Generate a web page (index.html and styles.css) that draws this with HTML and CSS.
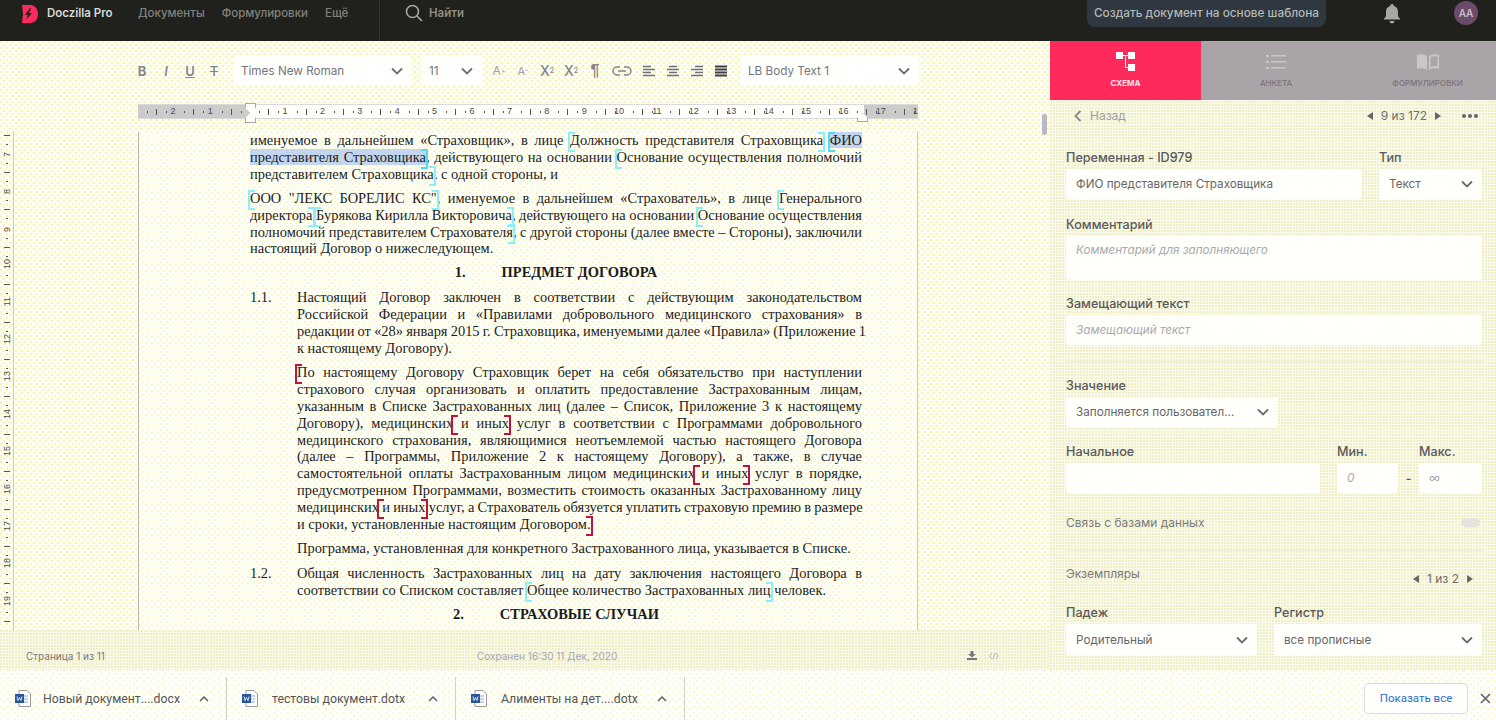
FILE: index.html
```html
<!DOCTYPE html>
<html lang="ru">
<head>
    <meta charset="UTF-8">
    <title>Doczilla Pro</title>
    <link rel="stylesheet" href="styles.css">
</head>
<body>
    <!-- Top bar -->
    <header class="topbar">
        <svg class="logo" width="18" height="20" viewBox="0 0 18 20">
            <path d="M1 1h8c5 0 8 4 8 9s-3 9-8 9H1l1-9z" fill="#ff2a5c"/>
            <path d="M9 4L4 11h3l-2 5 6-7H8l2-5z" fill="#26201f"/>
        </svg>
        <span class="brand">Doczilla Pro</span>
        <nav class="nav">
            <a>Документы</a>
            <a>Формулировки</a>
            <a>Ещё</a>
        </nav>
        <div class="search">
            <svg width="18" height="18" viewBox="0 0 18 18" fill="none" stroke="#a9a9a4" stroke-width="1.6">
                <circle cx="7.5" cy="7.5" r="6"/><path d="M12 12l5 5"/>
            </svg>
            <span>Найти</span>
        </div>
        <div class="create-btn">Создать документ на основе шаблона</div>
        <svg class="bell" width="18" height="21" viewBox="0 0 18 21">
            <path d="M9 1a1.6 1.6 0 0 1 1.6 1.8C13.5 3.6 15 6 15 9v4l2.4 3.4H.6L3 13V9c0-3 1.5-5.4 4.4-6.2A1.6 1.6 0 0 1 9 1z" fill="#a8a8a2"/>
            <path d="M6.5 18h5a2.5 2.5 0 0 1-5 0z" fill="#a8a8a2"/>
        </svg>
        <div class="avatar">AA</div>
    </header>

    <div class="main">
        <!-- Editor -->
        <section class="editor">
            <div class="toolbar">
                <span class="tool tool-b">B</span>
                <span class="tool tool-i">I</span>
                <span class="tool tool-u">U</span>
                <span class="tool tool-s">T</span>
                <div class="select select-font">Times New Roman<svg class="chev" viewBox="0 0 12 8"><path d="M1 1.5l5 5 5-5"/></svg></div>
                <div class="select select-size">11<svg class="chev" viewBox="0 0 12 8"><path d="M1 1.5l5 5 5-5"/></svg></div>
                <span class="tool tool-first tool-a">A<sup>+</sup></span>
                <span class="tool tool-a small">A<sup>-</sup></span>
                <span class="tool tool-x">X<sub>2</sub></span>
                <span class="tool tool-x">X<sup>2</sup></span>
                <span class="tool tool-p">¶</span>
                <span class="tool tool-link">
                    <svg width="20" height="10" viewBox="0 0 20 10" fill="none" stroke="#85858c" stroke-width="1.5">
                        <path d="M8 1H5a4 4 0 0 0 0 8h3M12 1h3a4 4 0 0 1 0 8h-3M6 5h8"/>
                    </svg>
                </span>
                <span class="tool"><svg width="12" height="12" viewBox="0 0 12 12" stroke="#70707a" stroke-width="1.6"><path d="M0 1.5h8M0 4.5h12M0 7.5h8M0 10.5h12"/></svg></span>
                <span class="tool"><svg width="12" height="12" viewBox="0 0 12 12" stroke="#70707a" stroke-width="1.6"><path d="M2 1.5h8M0 4.5h12M2 7.5h8M0 10.5h12"/></svg></span>
                <span class="tool"><svg width="12" height="12" viewBox="0 0 12 12" stroke="#70707a" stroke-width="1.6"><path d="M4 1.5h8M0 4.5h12M4 7.5h8M0 10.5h12"/></svg></span>
                <span class="tool"><svg width="12" height="12" viewBox="0 0 12 12" stroke="#3e3e46" stroke-width="1.8"><path d="M0 1.5h12M0 4.5h12M0 7.5h12M0 10.5h12"/></svg></span>
                <div class="select select-style">LB Body Text 1<svg class="chev" viewBox="0 0 12 8"><path d="M1 1.5l5 5 5-5"/></svg></div>
            </div>

            <div class="ruler">
                <span class="cm">2</span><span class="cm">1</span><span class="cm"></span>
                <span class="cm">1</span><span class="cm">2</span><span class="cm">3</span><span class="cm">4</span>
                <span class="cm">5</span><span class="cm">6</span><span class="cm">7</span><span class="cm">8</span>
                <span class="cm">9</span><span class="cm">10</span><span class="cm">11</span><span class="cm">12</span>
                <span class="cm">13</span><span class="cm">14</span><span class="cm">15</span><span class="cm">16</span>
                <span class="cm">17</span><span class="cm">1</span>
                <i class="indent indent-left"></i>
                <i class="indent indent-right"></i>
            </div>

            <div class="doc-area">
                <div class="vruler">
                    <span class="vcm"><b>7</b></span><span class="vcm"><b>8</b></span><span class="vcm"><b>9</b></span>
                    <span class="vcm"><b>10</b></span><span class="vcm"><b>11</b></span><span class="vcm"><b>12</b></span>
                    <span class="vcm"><b>13</b></span><span class="vcm"><b>14</b></span><span class="vcm"><b>15</b></span>
                    <span class="vcm"><b>16</b></span><span class="vcm"><b>17</b></span><span class="vcm"><b>18</b></span>
                    <span class="vcm"><b>19</b></span><span class="vcm"></span>
                </div>
                <div class="page">
                    <div class="doc">
                        <p>
                            <span class="ln">именуемое в дальнейшем «Страховщик», в лице <i class="mk open"></i>Должность представителя Страховщика<i class="mk close"></i> <span class="sel"><i class="mk open strong"></i>ФИО</span></span>
                            <span class="ln"><span class="sel">представителя Страховщика<i class="mk close strong"></i></span>, действующего на основании <i class="mk open"></i>Основание осуществления полномочий</span>
                            <span class="ln last">представителем Страховщика<i class="mk close"></i>, с одной стороны, и</span>
                        </p>
                        <p>
                            <span class="ln"><i class="mk open"></i>ООО "ЛЕКС БОРЕЛИС КС"<i class="mk close"></i>, именуемое в дальнейшем «Страхователь», в лице <i class="mk open"></i>Генерального</span>
                            <span class="ln">директора<i class="mk close"></i> <i class="mk open"></i>Бурякова Кирилла Викторовича<i class="mk close"></i>, действующего на основании <i class="mk open"></i>Основание осуществления</span>
                            <span class="ln">полномочий представителем Страхователя<i class="mk close"></i>, с другой стороны (далее вместе – Стороны), заключили</span>
                            <span class="ln last">настоящий Договор о нижеследующем.</span>
                        </p>
                        <h3 class="doc-title"><span>1.</span><span>ПРЕДМЕТ ДОГОВОРА</span></h3>
                        <div class="item">
                            <span>1.1.</span>
                            <div>
                                <p>
                                    <span class="ln">Настоящий Договор заключен в соответствии с действующим законодательством</span>
                                    <span class="ln">Российской Федерации и «Правилами добровольного медицинского страхования» в</span>
                                    <span class="ln">редакции от «28» января 2015 г. Страховщика, именуемыми далее «Правила» (Приложение 1</span>
                                    <span class="ln last">к настоящему Договору).</span>
                                </p>
                                <p>
                                    <span class="ln"><i class="mk open red"></i>По настоящему Договору Страховщик берет на себя обязательство при наступлении</span>
                                    <span class="ln">страхового случая организовать и оплатить предоставление Застрахованным лицам,</span>
                                    <span class="ln">указанным в Списке Застрахованных лиц (далее – Список, Приложение 3 к настоящему</span>
                                    <span class="ln">Договору), медицинских<i class="mk open red"></i> и иных<i class="mk close red"></i> услуг в соответствии с Программами добровольного</span>
                                    <span class="ln">медицинского страхования, являющимися неотъемлемой частью настоящего Договора</span>
                                    <span class="ln">(далее – Программы, Приложение 2 к настоящему Договору), а также, в случае</span>
                                    <span class="ln">самостоятельной оплаты Застрахованным лицом медицинских<i class="mk open red"></i> и иных<i class="mk close red"></i> услуг в порядке,</span>
                                    <span class="ln">предусмотренном Программами, возместить стоимость оказанных Застрахованному лицу</span>
                                    <span class="ln">медицинских<i class="mk open red"></i> и иных<i class="mk close red"></i> услуг, а Страхователь обязуется уплатить страховую премию в размере</span>
                                    <span class="ln last">и сроки, установленные настоящим Договором.<i class="mk close red"></i></span>
                                </p>
                                <p>
                                    <span class="ln last">Программа, установленная для конкретного Застрахованного лица, указывается в Списке.</span>
                                </p>
                            </div>
                        </div>
                        <div class="item item-next">
                            <span>1.2.</span>
                            <div>
                                <p>
                                    <span class="ln">Общая численность Застрахованных лиц на дату заключения настоящего Договора в</span>
                                    <span class="ln last">соответствии со Списком составляет <i class="mk open"></i>Общее количество Застрахованных лиц<i class="mk close"></i> человек.</span>
                                </p>
                            </div>
                        </div>
                        <h3 class="doc-title title-2"><span>2.</span><span>СТРАХОВЫЕ СЛУЧАИ</span></h3>
                    </div>
                </div>
            </div>

            <div class="status">
                <span class="status-page">Страница 1 из 11</span>
                <span class="status-saved">Сохранен 16:30 11 Дек, 2020</span>
                <svg class="status-dl" width="10" height="9" viewBox="0 0 10 9" fill="#77777a"><path d="M3.5 0h3v3H9L5 6.5 1 3h2.5zM0 7h10v2H0z"/></svg>
                <svg class="status-code" width="10" height="8" viewBox="0 0 10 8" fill="none" stroke="#b4b4bc" stroke-width="1"><path d="M3 1L.8 4 3 7M7 1l2.2 3L7 7M6 .5L4 7.5"/></svg>
            </div>
            <div class="thumb"></div>
        </section>

        <!-- Right panel -->
        <aside class="panel">
            <div class="tabs">
                <div class="tab active">
                    <svg width="20" height="20" viewBox="0 0 20 20" fill="#fff">
                        <rect x="0" y="0" width="7" height="7"/><rect x="12" y="0" width="7" height="7"/><rect x="12" y="12" width="7" height="7"/>
                        <path d="M7 3h5v1H10v11h2v1H9V4H7z"/>
                    </svg>
                    <span>Схема</span>
                </div>
                <div class="tab">
                    <svg width="20" height="16" viewBox="0 0 20 16" fill="#c9c6ca">
                        <rect x="0" y="1" width="3" height="2"/><rect x="0" y="7" width="3" height="2"/><rect x="0" y="13" width="3" height="2"/>
                        <rect x="5" y="1" width="15" height="1.5"/><rect x="5" y="7" width="15" height="1.5"/><rect x="5" y="13" width="15" height="1.5"/>
                    </svg>
                    <span>Анкета</span>
                </div>
                <div class="tab tab-last">
                    <svg width="22" height="16" viewBox="0 0 22 16" fill="#c9c6ca">
                        <path d="M0 1c3-1 7-1 10 1v14c-3-2-7-2-10-1z"/>
                        <path d="M12 2c3-2 7-2 10-1v14c-3-1-7-1-10 1zM13.500 3v10c2-1 5-1 7-.8V2.400C18 2 15.500 2 13.500 3z"/>
                    </svg>
                    <span>Формулировки</span>
                </div>
            </div>

            <div class="back-row">
                <svg width="8" height="12" viewBox="0 0 8 12" fill="none" stroke="#8b8b8b" stroke-width="1.8"><path d="M6.500 1L1.500 6l5 5"/></svg>
                <span class="back">Назад</span>
                <span class="pager">
                    <i class="arrow left"></i><span>9 из 172</span><i class="arrow right"></i>
                </span>
                <span class="dots"><i></i><i></i><i></i></span>
            </div>

            <div class="form">
                <div class="row row-var">
                    <div class="field grow">
                        <label>Переменная - ID979</label>
                        <div class="input">ФИО представителя Страховщика</div>
                    </div>
                    <div class="field field-type">
                        <label>Тип</label>
                        <div class="input has-chev">Текст<svg class="chev" viewBox="0 0 12 8"><path d="M1 1.5l5 5 5-5"/></svg></div>
                    </div>
                </div>
                <div class="field gap-top gap-first">
                    <label>Комментарий</label>
                    <div class="input area hint">Комментарий для заполняющего</div>
                </div>
                <div class="field gap-top">
                    <label>Замещающий текст</label>
                    <div class="input hint">Замещающий текст</div>
                </div>
                <hr class="divider">
                <div class="field field-value">
                    <label>Значение</label>
                    <div class="input has-chev">Заполняется пользовател...<svg class="chev" viewBox="0 0 12 8"><path d="M1 1.5l5 5 5-5"/></svg></div>
                </div>
                <div class="row row-init">
                    <div class="field grow">
                        <label>Начальное</label>
                        <div class="input"></div>
                    </div>
                    <div class="field field-min">
                        <label>Мин.</label>
                        <div class="input hint">0</div>
                    </div>
                    <span class="dash">-</span>
                    <div class="field field-max">
                        <label>Макс.</label>
                        <div class="input hint no-italic">∞</div>
                    </div>
                </div>
                <div class="db-row">
                    <span>Связь с базами данных</span>
                    <i class="toggle"></i>
                </div>
                <hr class="divider divider-2">
                <div class="copies">
                    <span>Экземпляры</span>
                    <span class="pager pager-small"><i class="arrow left"></i><span>1 из 2</span><i class="arrow right"></i></span>
                </div>
                <div class="row row-case">
                    <div class="field field-case">
                        <label>Падеж</label>
                        <div class="input has-chev">Родительный<svg class="chev" viewBox="0 0 12 8"><path d="M1 1.5l5 5 5-5"/></svg></div>
                    </div>
                    <div class="field grow">
                        <label>Регистр</label>
                        <div class="input has-chev">все прописные<svg class="chev" viewBox="0 0 12 8"><path d="M1 1.5l5 5 5-5"/></svg></div>
                    </div>
                </div>
            </div>
        </aside>
    </div>

    <!-- Browser downloads bar -->
    <footer class="downloads">
        <div class="dl-item">
            <svg class="word" width="16" height="17" viewBox="0 0 16 17"><path d="M4 .5h8l3.500 3.500v12.500H4z" fill="#fff" stroke="#9a9a9a"/><path d="M7 6h6M7 9h6M7 12h6" stroke="#8aa5cf"/><rect x="0" y="4" width="9" height="9" fill="#2b579a"/><path d="M2 6.500l1 4 1.500-3 1.500 3 1-4" fill="none" stroke="#fff" stroke-width=".8"/></svg>
            <span class="dl-name">Новый документ....docx</span>
            <svg class="dl-up" width="10" height="6" viewBox="0 0 10 6" fill="none" stroke="#5f6368" stroke-width="1.5"><path d="M1 5l4-4 4 4"/></svg>
        </div>
        <div class="dl-item">
            <svg class="word" width="16" height="17" viewBox="0 0 16 17"><path d="M4 .5h8l3.500 3.500v12.500H4z" fill="#fff" stroke="#9a9a9a"/><path d="M7 6h6M7 9h6M7 12h6" stroke="#8aa5cf"/><rect x="0" y="4" width="9" height="9" fill="#2b579a"/><path d="M2 6.500l1 4 1.500-3 1.500 3 1-4" fill="none" stroke="#fff" stroke-width=".8"/></svg>
            <span class="dl-name">тестовы документ.dotx</span>
            <svg class="dl-up" width="10" height="6" viewBox="0 0 10 6" fill="none" stroke="#5f6368" stroke-width="1.5"><path d="M1 5l4-4 4 4"/></svg>
        </div>
        <div class="dl-item">
            <svg class="word" width="16" height="17" viewBox="0 0 16 17"><path d="M4 .5h8l3.500 3.500v12.500H4z" fill="#fff" stroke="#9a9a9a"/><path d="M7 6h6M7 9h6M7 12h6" stroke="#8aa5cf"/><rect x="0" y="4" width="9" height="9" fill="#2b579a"/><path d="M2 6.500l1 4 1.500-3 1.500 3 1-4" fill="none" stroke="#fff" stroke-width=".8"/></svg>
            <span class="dl-name">Алименты на дет....dotx</span>
            <svg class="dl-up" width="10" height="6" viewBox="0 0 10 6" fill="none" stroke="#5f6368" stroke-width="1.5"><path d="M1 5l4-4 4 4"/></svg>
        </div>
        <div class="show-all">Показать все</div>
        <svg class="dl-close" width="11" height="11" viewBox="0 0 11 11" stroke="#5f6368" stroke-width="1.6"><path d="M1 1l9 9M10 1l-9 9"/></svg>
    </footer>
</body>
</html>
```

FILE: styles.css
```css
* {
    margin: 0;
    padding: 0;
    box-sizing: border-box;
}

:root {
    --dot: radial-gradient(circle at 1px 1px, #f9f6a6 .8px, transparent 1px);
    --dot-light: radial-gradient(circle at 1px 1px, #fbf9bc .8px, transparent 1px);
    --dot-dense: radial-gradient(circle at 1px 1px, #efeec4 .9px, transparent 1px);
}

body {
    width: 1496px;
    height: 720px;
    overflow: hidden;
    display: flex;
    flex-direction: column;
    font-family: Inter, 'Noto Sans', sans-serif;
    font-size: 12px;
    color: #555;
    background: #fff;
}

/* Top bar */
.topbar {
    height: 41px;
    flex: none;
    display: flex;
    align-items: flex-start;
    padding-left: 21px;
    position: relative;
    background: #20211c;
    color: #a2a29c;
    font-size: 11.5px;
    font-weight: 500;
    line-height: 27px;
}

.logo {
    margin-top: 4px;
}

.brand {
    width: 66px;
    margin-left: 8px;
    color: #d9d9d4;
    font-weight: 600;
    white-space: nowrap;
}

.nav {
    display: flex;
    gap: 17px;
    width: 242px;
    height: 41px;
    margin-left: 25px;
    border-right: 1px solid #33342e;
    color: #82827b;
}

.search {
    display: flex;
    gap: 6px;
    margin-left: 25px;
    width: 682px;
    font-weight: 600;
    color: #8f8f89;
}

.search svg {
    margin-top: 4px;
}

.create-btn {
    width: 239px;
    height: 27px;
    border-radius: 0 0 8px 8px;
    background: #2f3740;
    color: #b4b8b6;
    text-align: center;
    font-size: 11.8px;
}

.bell {
    margin: 3px 0 0 57px;
}

.avatar {
    width: 24px;
    height: 24px;
    margin: 1px 0 0 53px;
    border-radius: 50%;
    background: #6c4b69;
    color: #c9bdc8;
    text-align: center;
    font-size: 10px;
    font-weight: 600;
    line-height: 24px;
}

.main {
    flex: 1;
    display: flex;
    min-height: 0;
}

/* Editor */
.editor {
    width: 1050px;
    display: flex;
    flex-direction: column;
    position: relative;
    background: var(--dot) 0 0/6px 6px, var(--dot) 3px 3px/6px 6px, #fefef9;
}

.toolbar {
    height: 59px;
    flex: none;
    display: flex;
    align-items: center;
    padding-left: 130px;
}

.tool {
    width: 24px;
    display: flex;
    justify-content: center;
    align-items: center;
    color: #85858c;
    font-size: 13px;
    line-height: 16px;
}

.tool-b { font-weight: 700; }
.tool-i { font-style: italic; font-weight: 600; }
.tool-u { text-decoration: underline; font-weight: 600; }
.tool-s { text-decoration: line-through; font-weight: 500; }
.tool-first { margin-left: 5px; }
.tool-a { font-size: 12px; color: #a0a0a6; }
.tool-a.small { font-size: 11px; }
.tool-x { font-size: 14px; font-weight: 500; }
.tool-p { font-size: 16px; font-weight: 700; font-family: 'Liberation Sans', sans-serif; }
.tool-link { width: 30px; }

.tool sup, .tool sub {
    font-size: 7px;
    line-height: 0;
}

.select {
    height: 30px;
    display: flex;
    align-items: center;
    justify-content: space-between;
    padding: 0 9px 0 8px;
    border-radius: 4px;
    background: #fffffd;
    color: #75757c;
    font-size: 11.7px;
}

.select-font { width: 179px; margin-left: 7px; }
.select-size { width: 61px; margin-left: 9px; }
.select-style { width: 179px; margin-left: 7px; }

.chev {
    width: 12px;
    height: 8px;
    flex: none;
    fill: none;
    stroke: #6b6b72;
    stroke-width: 1.8;
}

/* Rulers */
.ruler {
    width: 780px;
    height: 15px;
    flex: none;
    margin: 4px 0 0 138px;
    display: flex;
    position: relative;
    border-top: 1px solid #d9d9dc;
    border-bottom: 1px solid #d9d9dc;
    background: linear-gradient(90deg, #cbcbc9 112px, #fffffc 112px, #fffffc 726px, #cbcbc9 726px);
}

.cm {
    width: 37.4px;
    flex: none;
    text-align: right;
    font-family: 'Liberation Sans', sans-serif;
    font-size: 9px;
    line-height: 13px;
    color: #4a4a4a;
    background:
        linear-gradient(#555, #555) 9px 50%/1px 2px no-repeat,
        linear-gradient(#555, #555) 18px 50%/1px 6px no-repeat,
        linear-gradient(#555, #555) 28px 50%/1px 2px no-repeat;
}

.cm:last-of-type {
    width: 32px;
}

.indent {
    position: absolute;
    background: #fffffc;
    border: 1px solid #a9a9a9;
}

.indent-left {
    left: 107px;
    top: -2px;
    width: 11px;
    height: 20px;
    clip-path: polygon(0 0, 100% 0, 100% 22%, 50% 50%, 100% 75%, 100% 100%, 0 100%, 0 75%, 50% 50%, 0 22%);
}

.indent-right {
    left: 719px;
    top: 8px;
    width: 11px;
    height: 9px;
    clip-path: polygon(50% 0, 100% 55%, 100% 100%, 0 100%, 0 55%);
}

.doc-area {
    flex: 1;
    min-height: 0;
    display: flex;
    padding-top: 13px;
    overflow: hidden;
}

.vruler {
    width: 14px;
    flex: none;
    border-right: 1px solid #c8c8d2;
    overflow: hidden;
}

.vcm {
    height: 37.4px;
    display: flex;
    justify-content: center;
    align-items: flex-end;
    background:
        linear-gradient(#555, #555) 50% 6px/2px 1px no-repeat,
        linear-gradient(#555, #555) 50% 15px/6px 1px no-repeat,
        linear-gradient(#555, #555) 50% 24px/2px 1px no-repeat;
}

.vcm:first-child {
    margin-top: -12.4px;
}

.vcm b {
    writing-mode: vertical-rl;
    transform: rotate(180deg);
    font-family: 'Liberation Sans', sans-serif;
    font-size: 9px;
    font-weight: 400;
    color: #4a4a4a;
    line-height: 12px;
}

/* Page */
.page {
    width: 780px;
    margin-left: 124px;
    padding-left: 111px;
    border-left: 1px solid #b5b5b5;
    border-right: 1px solid #c5c5c5;
    overflow: hidden;
    background: var(--dot-light) 0 0/6px 6px, var(--dot-light) 3px 3px/6px 6px, #fffffe;
}

.doc {
    width: 612px;
    font-family: 'Liberation Serif', 'Times New Roman', serif;
    font-size: 14.45px;
    line-height: 16.9px;
    color: #1c1c1c;
}

.doc p {
    margin-bottom: 7px;
}

.ln {
    display: block;
    white-space: nowrap;
    word-spacing: -.4px;
    text-align: justify;
    text-align-last: justify;
}

.ln.last {
    word-spacing: 0;
    text-align-last: left;
}

.sel {
    background: #c4d5ee;
}

.mk {
    display: inline-block;
    width: 0;
    height: 0;
    position: relative;
}

.mk::before {
    content: "";
    position: absolute;
    top: -13px;
    width: 5px;
    height: 16px;
    border: 2px solid #8af0f4;
}

.mk.open::before {
    left: -2px;
    border-right: none;
}

.mk.close::before {
    right: -2px;
    border-left: none;
}

.mk.strong::before {
    border-color: #4fdcee;
}

.mk.red::before {
    border-color: #c2123f;
}

.doc-title {
    display: flex;
    justify-content: center;
    gap: 36px;
    margin-bottom: 8px;
    font-size: 14.45px;
    font-weight: 700;
}

.item {
    display: grid;
    grid-template-columns: 47px 565px;
}

.item-next {
    margin-top: 1px;
}

/* Status line */
.status {
    height: 40px;
    flex: none;
    display: flex;
    align-items: flex-start;
    padding: 20px 0 0 26px;
    font-size: 10px;
    line-height: 12px;
    color: #7a7a7a;
    background: var(--dot-dense) 0 0/3px 3px, #f9f9ec;
}

.status-page {
    width: 451px;
}

.status-saved {
    width: 490px;
    color: #a6a6b4;
}

.status-dl {
    margin-top: 1px;
}

.status-code {
    margin: 2px 0 0 12px;
}

.thumb {
    position: absolute;
    left: 1042px;
    top: 73px;
    width: 5px;
    height: 21px;
    border-radius: 2px;
    background: #b9bac6;
}

/* Right panel */
.panel {
    width: 446px;
    display: flex;
    flex-direction: column;
    overflow: hidden;
    background: var(--dot-dense) 0 0/3px 3px, #fbfbf0;
}

.tabs {
    height: 59px;
    flex: none;
    display: grid;
    grid-template-columns: 151px 150px 1fr;
    background: #aaa4a9;
}

.tab {
    display: flex;
    flex-direction: column;
    align-items: center;
    padding-top: 11px;
    color: #7a7378;
    font-size: 8px;
    font-weight: 500;
    text-transform: uppercase;
}

.tab svg {
    height: 20px;
}

.tab span {
    margin-top: 6px;
}

.tab.active {
    background: #ff2a5c;
    color: #fde5ea;
    font-weight: 700;
}

.tab-last {
    padding-left: 8px;
}

.back-row {
    height: 31px;
    flex: none;
    display: flex;
    align-items: center;
    padding: 0 18px 0 24px;
}

.back {
    margin-left: 8px;
    color: #a0a0a0;
}

.pager {
    display: flex;
    align-items: center;
    gap: 8px;
    margin-left: auto;
    color: #6e6e6e;
    font-size: 12px;
}

.arrow {
    border: 4px solid transparent;
    width: 0;
    height: 0;
}

.arrow.left {
    border-left: none;
    border-right: 6px solid #666;
}

.arrow.right {
    border-right: none;
    border-left: 6px solid #666;
}

.dots {
    display: flex;
    gap: 2px;
    margin-left: 21px;
}

.dots i {
    width: 4px;
    height: 4px;
    border-radius: 50%;
    background: #666;
}

.form {
    padding: 19px 14px 0 16px;
}

.row {
    display: flex;
}

.field label {
    display: block;
    height: 15px;
    margin-bottom: 4px;
    line-height: 15px;
    color: #5a5a5a;
    font-size: 12.6px;
    font-weight: 500;
}

.grow {
    flex: 1;
}

.input {
    height: 30px;
    display: flex;
    align-items: center;
    justify-content: space-between;
    padding: 0 10px;
    border-radius: 3px;
    background: #fffffb;
    color: #666;
    font-size: 11.7px;
}

.has-chev {
    padding-right: 9px;
}

.hint {
    font-style: italic;
    color: #a9a9ae;
}

.no-italic {
    font-style: normal;
    justify-content: flex-start;
}

.area {
    height: 44px;
    align-items: flex-start;
    padding-top: 7px;
}

.gap-top {
    margin-top: 16px;
}

.gap-first {
    margin-top: 18px;
}

.field-type {
    width: 103px;
    margin-left: 18px;
}

.divider {
    height: 0;
    margin: 16px 0;
    border: none;
    border-top: 1px solid #eeeee0;
}

.field-value {
    width: 212px;
}

.row-init {
    margin-top: 17px;
}

.field-min {
    width: 61px;
    margin-left: 17px;
}

.field-max {
    width: 63px;
}

.dash {
    width: 21px;
    margin-top: 27px;
    text-align: center;
    font-weight: 600;
}

.db-row {
    display: flex;
    justify-content: space-between;
    align-items: center;
    height: 15px;
    margin-top: 22px;
    padding-right: 2px;
    color: #7c7c7c;
}

.toggle {
    width: 19px;
    height: 9px;
    border-radius: 5px;
    background: #e4e4dc;
}

.divider-2 {
    margin: 20px 0 15px;
}

.copies {
    display: flex;
    justify-content: space-between;
    height: 39px;
    padding-right: 9px;
    color: #7c7c7c;
}

.pager-small {
    gap: 8px;
    margin-top: 5px;
    height: 15px;
}

.row-case {
    gap: 17px;
}

.field-case {
    width: 191px;
}

.row-case .input {
    height: 31px;
}

/* Downloads bar */
.downloads {
    height: 50px;
    flex: none;
    display: flex;
    align-items: center;
    padding-top: 7px;
    background: var(--dot-light) 0 0/7px 7px, var(--dot-light) 3px 3px/7px 7px, #fff;
}

.dl-item {
    width: 229px;
    height: 100%;
    display: flex;
    align-items: center;
    padding-left: 15px;
    border-right: 1px solid #cfcfcf;
    font-family: Roboto, 'Noto Sans', sans-serif;
    font-size: 12.25px;
    color: #555;
}

.dl-item:first-child {
    width: 227px;
}

.dl-name {
    width: 156px;
    margin-left: 12px;
    white-space: nowrap;
}

.dl-item + .dl-item .dl-name {
    margin-left: 14px;
}

.show-all {
    width: 104px;
    height: 31px;
    margin-left: 679px;
    border: 1px solid #dadce0;
    border-radius: 4px;
    text-align: center;
    line-height: 29px;
    font-family: Roboto, 'Noto Sans', sans-serif;
    font-size: 11.5px;
    color: #2d6ec9;
    background: #fff;
}

.dl-close {
    margin-left: 12px;
}
```
